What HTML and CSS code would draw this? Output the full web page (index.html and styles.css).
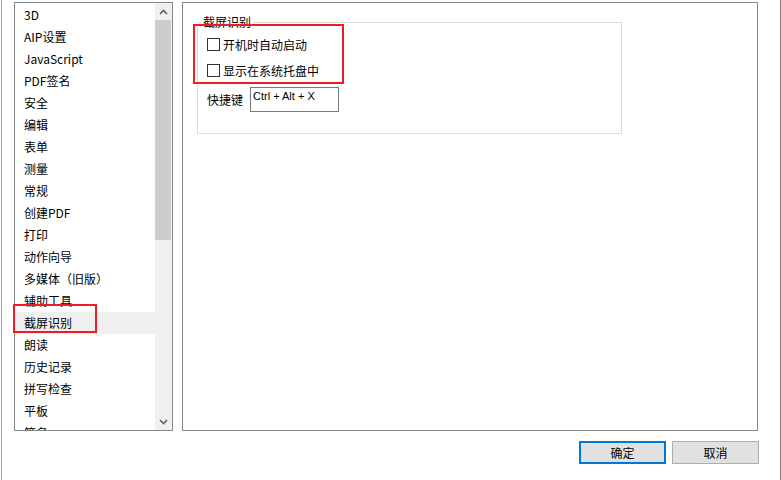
FILE: index.html
```html
<!DOCTYPE html>
<html lang="zh-CN">
<head>
<meta charset="utf-8">
<title>首选项</title>
<link rel="stylesheet" href="styles.css">
</head>
<body>
<div class="window">
  <div class="main">
    <div class="list">
      <div class="items">
        <div class="item">3D</div>
        <div class="item">AIP设置</div>
        <div class="item">JavaScript</div>
        <div class="item">PDF签名</div>
        <div class="item">安全</div>
        <div class="item">编辑</div>
        <div class="item">表单</div>
        <div class="item">测量</div>
        <div class="item">常规</div>
        <div class="item">创建PDF</div>
        <div class="item">打印</div>
        <div class="item">动作向导</div>
        <div class="item">多媒体（旧版）</div>
        <div class="item">辅助工具</div>
        <div class="item selected">截屏识别</div>
        <div class="item">朗读</div>
        <div class="item">历史记录</div>
        <div class="item">拼写检查</div>
        <div class="item">平板</div>
        <div class="item">签名</div>
      </div>
      <div class="scrollbar">
        <div class="arrow"><svg width="9" height="6" viewBox="0 0 9 6"><polyline points="1,5 4.5,1.5 8,5" fill="none" stroke="#606060" stroke-width="1.6"/></svg></div>
        <div class="thumb"></div>
        <div class="track"></div>
        <div class="arrow"><svg width="9" height="6" viewBox="0 0 9 6"><polyline points="1,1 4.5,4.5 8,1" fill="none" stroke="#606060" stroke-width="1.6"/></svg></div>
      </div>
      <div class="mark mark-list"></div>
    </div>
    <div class="panel">
      <div class="group">
        <span class="legend">截屏识别</span>
        <label class="check"><span class="box"></span>开机时自动启动</label>
        <label class="check"><span class="box"></span>显示在系统托盘中</label>
        <div class="shortcut">
          <span class="shortcut-label">快捷键</span>
          <div class="textbox">Ctrl + Alt + X</div>
        </div>
      </div>
      <div class="mark mark-panel"></div>
    </div>
  </div>
  <div class="buttons">
    <div class="btn btn-default">确定</div>
    <div class="btn">取消</div>
  </div>
</div>
</body>
</html>
```
FILE: styles.css
```css
html, body {
  margin: 0;
  background: #ffffff;
}
body {
  font-family: "Noto Sans CJK SC", "Noto Sans", sans-serif;
  font-size: 12px;
  color: #000;
}
.window {
  margin-left: 1px;
  width: 778px;
  height: 480px;
  border-left: 1px solid #a0a0a0;
  border-right: 1px solid #7a7a7a;
  box-sizing: content-box;
}
.main {
  display: flex;
  gap: 9px;
  padding: 2px 0 0 12px;
}
.list {
  position: relative;
  width: 159px;
  height: 429px;
  box-sizing: border-box;
  border: 1px solid #828790;
  display: flex;
}
.items {
  flex: 1;
  padding-top: 1px;
  overflow: hidden;
}
.item {
  height: 22px;
  line-height: 22px;
  padding-left: 9px;
  white-space: nowrap;
}
.item.selected {
  background: #efefef;
}
.scrollbar {
  width: 17px;
  background: #f0f0f0;
  display: flex;
  flex-direction: column;
}
.arrow {
  height: 17px;
  display: flex;
  align-items: center;
  justify-content: center;
}
.thumb {
  height: 220px;
  margin-right: 1px;
  background: #cdcdcd;
}
.track {
  flex: 1;
}
.panel {
  position: relative;
  width: 576px;
  height: 429px;
  box-sizing: border-box;
  border: 1px solid #828790;
  padding: 19px 0 0 14px;
}
.group {
  position: relative;
  width: 425px;
  height: 112px;
  box-sizing: border-box;
  border: 1px solid #dcdcdc;
  padding: 8px 0 0 9px;
}
.legend {
  position: absolute;
  top: -9px;
  left: 3px;
  padding: 0 2px;
  line-height: 16px;
  background: #fff;
}
.check {
  display: flex;
  align-items: center;
  height: 26px;
  gap: 3px;
}
.box {
  width: 13px;
  height: 13px;
  box-sizing: border-box;
  border: 1px solid #333;
  background: #fff;
}
.shortcut {
  display: flex;
  align-items: center;
  gap: 7px;
  margin-top: 4px;
}
.shortcut-label {
  width: 36px;
}
.textbox {
  width: 89px;
  height: 25px;
  box-sizing: border-box;
  border: 1px solid #7a7a7a;
  padding: 1px 0 0 2px;
  font-family: "Liberation Sans", sans-serif;
  font-size: 11px;
  line-height: 14px;
}
.mark {
  position: absolute;
  border: 2px solid #ee1c24;
  box-sizing: border-box;
}
.mark-list {
  left: -2px;
  top: 301px;
  width: 84px;
  height: 29px;
}
.mark-panel {
  left: 10px;
  top: 21px;
  width: 151px;
  height: 60px;
}
.buttons {
  display: flex;
  justify-content: flex-end;
  gap: 6px;
  margin-top: 10px;
  padding-right: 21px;
}
.btn {
  width: 87px;
  height: 23px;
  box-sizing: border-box;
  border: 1px solid #adadad;
  background: #e1e1e1;
  display: flex;
  align-items: center;
  justify-content: center;
}
.btn-default {
  border: 2px solid #0078d7;
}
```
